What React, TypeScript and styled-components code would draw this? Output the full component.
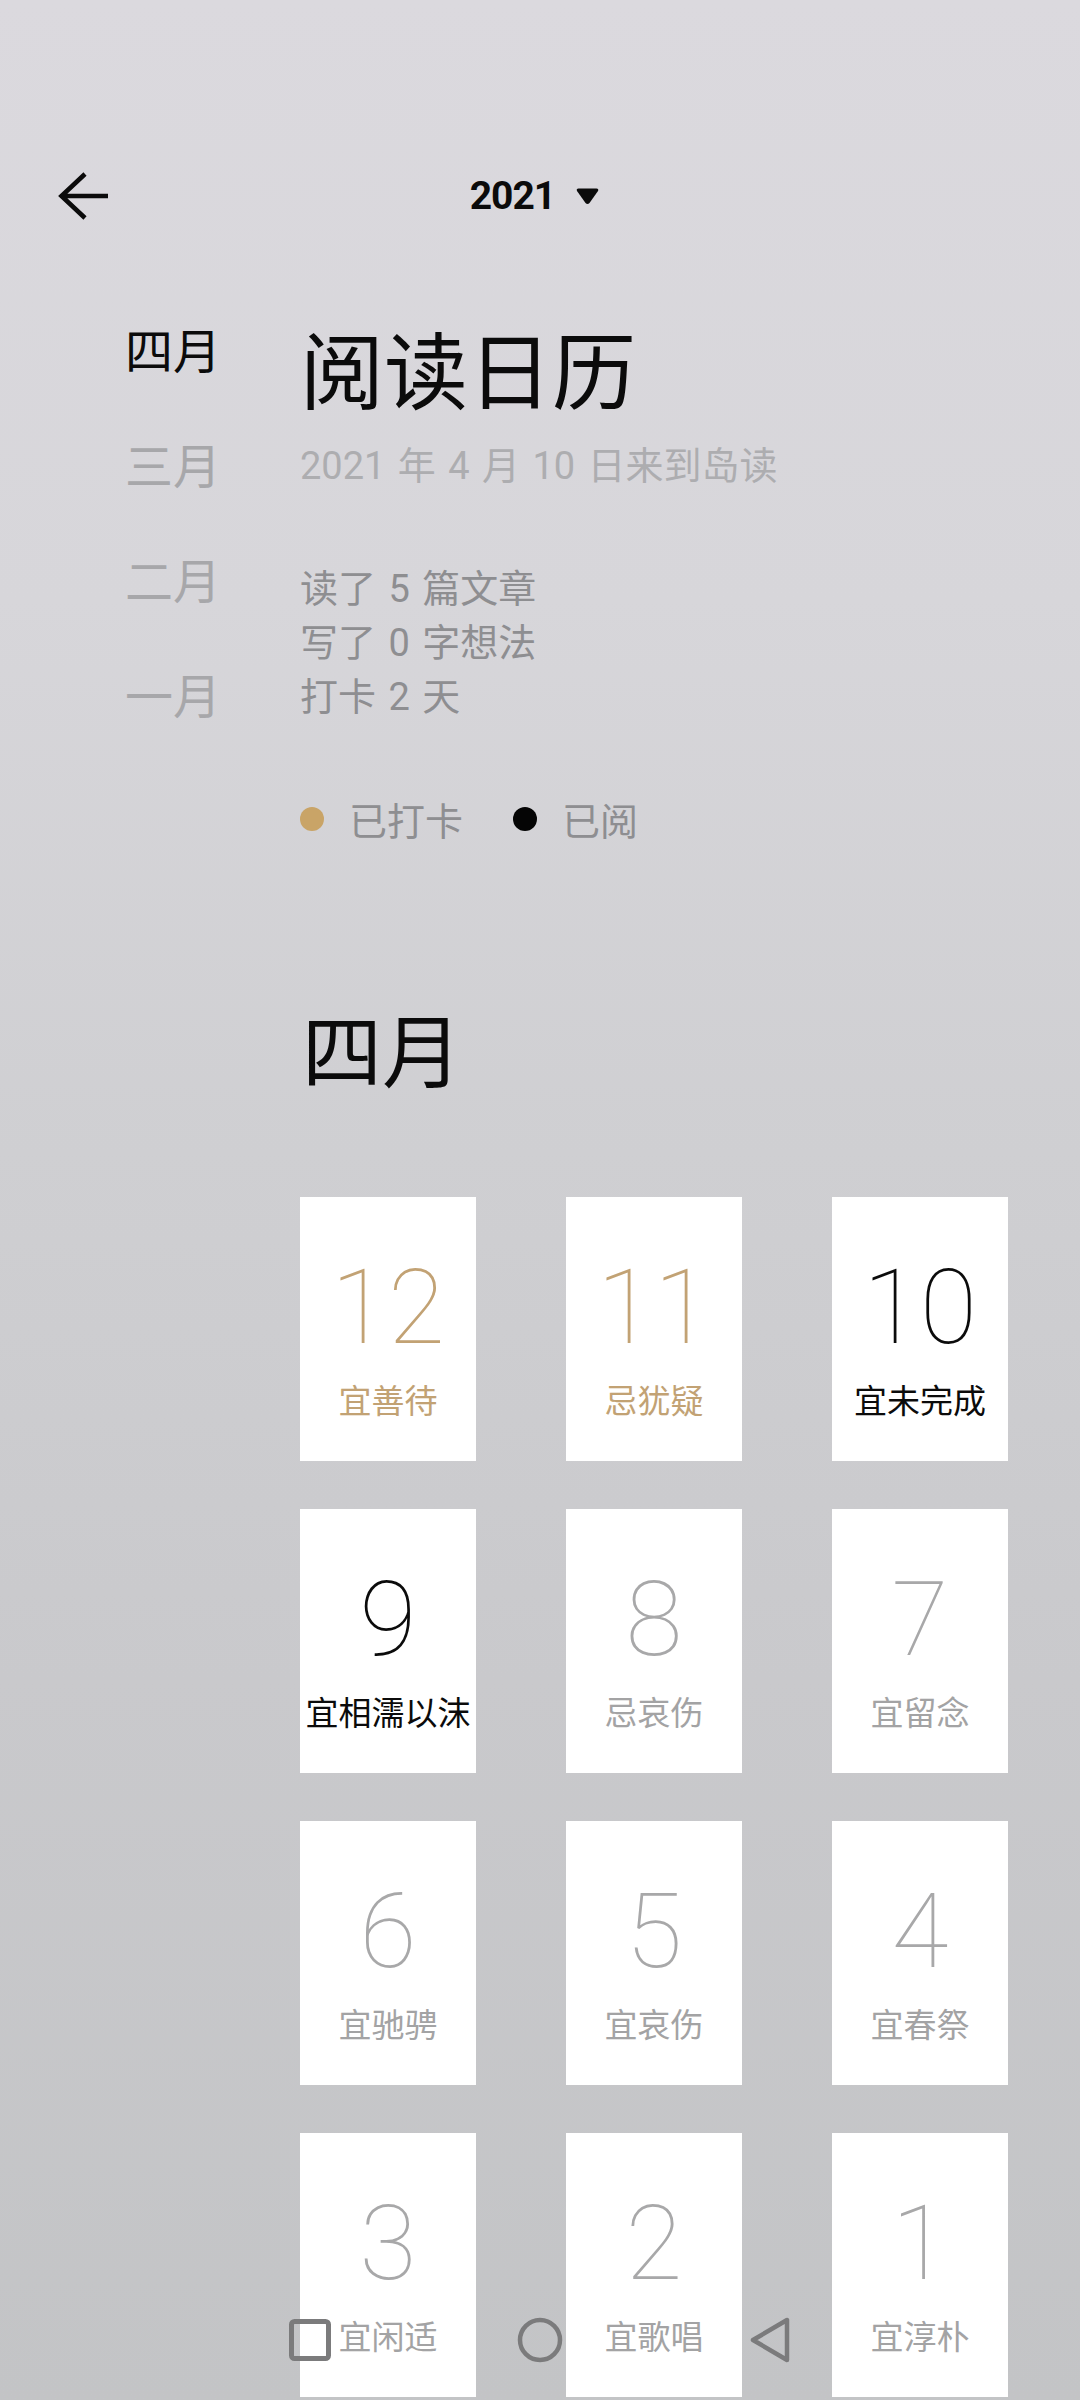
import React from "react";
import styled, { createGlobalStyle } from "styled-components";

const CJK = `"Noto Sans CJK SC", "Noto Sans", sans-serif`;
const MIXED = `Roboto, "Noto Sans CJK SC", sans-serif`;

const GlobalStyle = createGlobalStyle`
  html, body {
    margin: 0;
    padding: 0;
  }
  body {
    font-family: ${MIXED};
    background: #c4c5c7;
  }
  * { box-sizing: border-box; }
`;

const Page = styled.div`
  position: relative;
  width: 1080px;
  height: 2400px;
  overflow: hidden;
  background: linear-gradient(
    180deg,
    #dbd9de 0%,
    #d7d6da 25%,
    #cfcfd2 48%,
    #c9c9cc 70%,
    #c3c4c6 100%
  );
`;

const Header = styled.header`
  display: grid;
  grid-template-columns: 1fr auto 1fr;
  align-items: center;
  height: 90px;
  margin-top: 151px;
`;

const BackButton = styled.button`
  justify-self: start;
  display: flex;
  align-items: center;
  margin-left: 58px;
  padding: 0;
  border: 0;
  background: transparent;
`;

const YearPicker = styled.div`
  display: flex;
  align-items: center;
  gap: 21px;
  margin-right: 11px;
  font-family: Roboto, sans-serif;
  font-weight: 700;
  font-size: 39px;
  line-height: 90px;
  letter-spacing: -1px;
  color: #0b0b0b;
`;

const Intro = styled.section`
  display: flex;
  align-items: flex-start;
  margin-top: 83px;
  padding-left: 125px;
`;

const MonthList = styled.ul`
  display: flex;
  flex-direction: column;
  gap: 67px;
  width: 175px;
  margin: 0;
  padding: 0;
  list-style: none;
`;

const MonthItem = styled.li<{ $active?: boolean }>`
  font-family: ${CJK};
  font-size: 48px;
  line-height: 48px;
  color: ${(p) => (p.$active ? "#0b0b0b" : "#a7a7aa")};
`;

const Summary = styled.div`
  display: flex;
  flex-direction: column;
  padding-top: 1px;
`;

const Title = styled.h1`
  margin: 0;
  font-family: ${CJK};
  font-weight: 400;
  font-size: 84px;
  line-height: 84px;
  color: #0b0b0b;
`;

const Since = styled.p`
  margin: 38px 0 0;
  font-family: ${MIXED};
  font-size: 38px;
  line-height: 38px;
  word-spacing: 3px;
  color: #adadb0;
`;

const Stats = styled.div`
  display: flex;
  flex-direction: column;
  margin-top: 77px;
`;

const StatLine = styled.div`
  font-family: ${MIXED};
  font-size: 38px;
  line-height: 54px;
  word-spacing: 3px;
  color: #8e8e91;
`;

const Legend = styled.div`
  display: flex;
  align-items: center;
  margin-top: 76px;
  font-family: ${CJK};
  font-size: 38px;
  line-height: 38px;
  color: #8e8e91;
`;

const LegendItem = styled.div`
  display: flex;
  align-items: center;
  gap: 25px;
  & + & {
    margin-left: 50px;
  }
`;

const Dot = styled.span<{ $color: string }>`
  display: block;
  width: 24px;
  height: 24px;
  border-radius: 50%;
  background: ${(p) => p.$color};
`;

const MonthSection = styled.section`
  padding-left: 300px;
  margin-top: 168px;
`;

const MonthHeading = styled.h2`
  margin: 0 0 0 2px;
  font-family: ${CJK};
  font-weight: 400;
  font-size: 80px;
  line-height: 80px;
  color: #0b0b0b;
`;

const DayGrid = styled.div`
  display: grid;
  grid-template-columns: repeat(3, 176px);
  grid-auto-rows: 264px;
  column-gap: 90px;
  row-gap: 48px;
  margin-top: 111px;
`;

type Tone = "gold" | "dark" | "muted";

const numberColor: Record<Tone, string> = {
  gold: "#c2a274",
  dark: "#0b0b0b",
  muted: "#a8a8a9",
};

const labelColor: Record<Tone, string> = {
  gold: "#c2a274",
  dark: "#0b0b0b",
  muted: "#a3a3a4",
};

const DayCard = styled.div`
  display: flex;
  flex-direction: column;
  align-items: center;
  background: #ffffff;
  padding-top: 59px;
`;

const DayNumber = styled.div<{ $tone: Tone }>`
  font-family: Roboto, sans-serif;
  font-weight: 100;
  font-size: 104px;
  line-height: 104px;
  color: ${(p) => numberColor[p.$tone]};
`;

const DayLabel = styled.div<{ $tone: Tone }>`
  margin-top: 23px;
  font-family: ${CJK};
  font-size: 33px;
  line-height: 33px;
  white-space: nowrap;
  color: ${(p) => labelColor[p.$tone]};
`;

const NavBar = styled.nav`
  position: absolute;
  left: 0;
  right: 0;
  bottom: 0;
  height: 121px;
  display: flex;
  align-items: center;
  justify-content: center;
  gap: 170px;
`;

const NavKey = styled.span`
  display: flex;
  align-items: center;
  justify-content: center;
  width: 60px;
  height: 60px;
`;

const days: { n: number; label: string; tone: Tone }[] = [
  { n: 12, label: "宜善待", tone: "gold" },
  { n: 11, label: "忌犹疑", tone: "gold" },
  { n: 10, label: "宜未完成", tone: "dark" },
  { n: 9, label: "宜相濡以沫", tone: "dark" },
  { n: 8, label: "忌哀伤", tone: "muted" },
  { n: 7, label: "宜留念", tone: "muted" },
  { n: 6, label: "宜驰骋", tone: "muted" },
  { n: 5, label: "宜哀伤", tone: "muted" },
  { n: 4, label: "宜春祭", tone: "muted" },
  { n: 3, label: "宜闲适", tone: "muted" },
  { n: 2, label: "宜歌唱", tone: "muted" },
  { n: 1, label: "宜淳朴", tone: "muted" },
];

const months = ["四月", "三月", "二月", "一月"];

export default function App() {
  return (
    <>
      <GlobalStyle />
      <Page>
        <Header>
          <BackButton aria-label="返回">
            <svg width="52" height="48" viewBox="0 0 52 48">
              <path
                d="M27 2 L3.5 24 L27 46 M3.5 24 H50"
                fill="none"
                stroke="#0b0b0b"
                strokeWidth="4.6"
                strokeLinejoin="miter"
              />
            </svg>
          </BackButton>
          <YearPicker>
            <span>2021</span>
            <svg width="23" height="17" viewBox="0 0 23 17">
              <path
                d="M2.5 0.5 H20.5 Q23 0.5 22 3 L13.5 15 Q11.5 17 9.5 15 L1 3 Q0 0.5 2.5 0.5 Z"
                fill="#0b0b0b"
              />
            </svg>
          </YearPicker>
          <span />
        </Header>

        <Intro>
          <MonthList>
            {months.map((m, i) => (
              <MonthItem key={m} $active={i === 0}>
                {m}
              </MonthItem>
            ))}
          </MonthList>
          <Summary>
            <Title>阅读日历</Title>
            <Since>2021 年 4 月 10 日来到岛读</Since>
            <Stats>
              <StatLine>读了 5 篇文章</StatLine>
              <StatLine>写了 0 字想法</StatLine>
              <StatLine>打卡 2 天</StatLine>
            </Stats>
            <Legend>
              <LegendItem>
                <Dot $color="#c9a467" />
                <span>已打卡</span>
              </LegendItem>
              <LegendItem>
                <Dot $color="#050505" />
                <span>已阅</span>
              </LegendItem>
            </Legend>
          </Summary>
        </Intro>

        <MonthSection>
          <MonthHeading>四月</MonthHeading>
          <DayGrid>
            {days.map((d) => (
              <DayCard key={d.n}>
                <DayNumber $tone={d.tone}>{d.n}</DayNumber>
                <DayLabel $tone={d.tone}>{d.label}</DayLabel>
              </DayCard>
            ))}
          </DayGrid>
        </MonthSection>

        <NavBar>
          <NavKey>
            <svg width="46" height="46" viewBox="0 0 46 46">
              <rect
                x="4.5"
                y="4.5"
                width="37"
                height="37"
                rx="3"
                fill="none"
                stroke="#7b7b7c"
                strokeWidth="5"
              />
            </svg>
          </NavKey>
          <NavKey>
            <svg width="48" height="48" viewBox="0 0 48 48">
              <circle cx="24" cy="24" r="20" fill="none" stroke="#7b7b7c" strokeWidth="4.5" />
            </svg>
          </NavKey>
          <NavKey>
            <svg width="44" height="48" viewBox="0 0 44 48">
              <path
                d="M39 4 L39 44 L5 24 Z"
                fill="none"
                stroke="#7b7b7c"
                strokeWidth="4.5"
                strokeLinejoin="round"
              />
            </svg>
          </NavKey>
        </NavBar>
      </Page>
    </>
  );
}
